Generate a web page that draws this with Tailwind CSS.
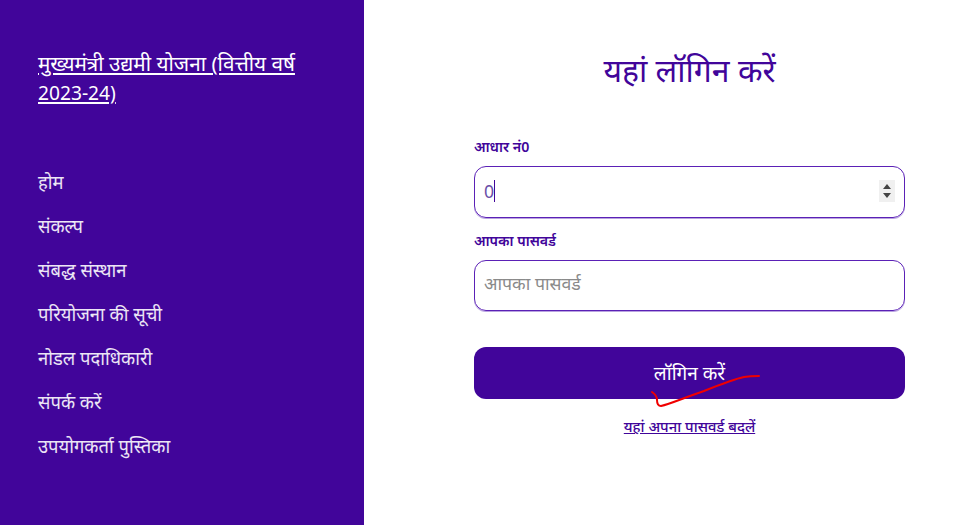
<!DOCTYPE html>
<html lang="hi">

<head>
    <meta charset="UTF-8">
    <title>मुख्यमंत्री उद्यमी योजना</title>
    <script src="https://cdn.jsdelivr.net/npm/@tailwindcss/browser@4"></script>
</head>

<body class="m-0 p-0 w-[975px] h-[525px] overflow-hidden bg-white font-['Noto_Sans',sans-serif]">

    <div class="flex h-full">
        <!-- sidebar -->
        <div class="w-[364px] h-full bg-[#41059a] pl-[38px] pr-[60px] pt-[49px] text-white">
            <a href="#" class="block text-[20.7px] leading-[29px] underline">मुख्यमंत्री उद्यमी योजना (वित्तीय वर्ष <span class="text-[19.2px]">2023-24)</span></a>
            <ul class="mt-[61.5px] flex flex-col gap-[18px] text-[18.4px] leading-[26px] text-white/90">
                <li>होम</li>
                <li>संकल्प</li>
                <li>संबद्ध संस्थान</li>
                <li>परियोजना की सूची</li>
                <li>नोडल पदाधिकारी</li>
                <li>संपर्क करें</li>
                <li>उपयोगकर्ता पुस्तिका</li>
            </ul>
        </div>

        <!-- login form -->
        <div class="relative pl-[110px] w-[541px] pt-[50px]">
            <h1 class="w-[431px] text-center text-[32px] leading-[40px] text-[#41059a]">यहां लॉगिन करें</h1>

            <form class="w-[431px] mt-[47px]">
                <label class="block text-[14.2px] leading-[20px] font-semibold text-[#41059a]">आधार नं0</label>
                <div class="mt-[9px] h-[52px] flex items-center pl-[9px] pr-[9px] pb-[2px] border border-[#5b21b6] shadow-[0_1px_0_#b9a3e0] rounded-[12px]">
                    <span class="text-[17.7px] text-[#6a4fa8]">0</span>
                    <span class="w-px h-[22px] bg-[#41059a]"></span>
                    <span class="ml-auto w-[16px] h-[22px] bg-[#f0f0f0] flex items-center justify-center">
                        <svg width="10" height="16" viewBox="0 0 10 16"><path d="M5 1 9 6H1z M1 10h8l-4 5z" fill="#444"/></svg>
                    </span>
                </div>

                <label class="block mt-[13px] text-[14.2px] leading-[20px] font-semibold text-[#41059a]">आपका पासवर्ड</label>
                <input type="password" placeholder="आपका पासवर्ड" class="mt-[9px] block w-full h-[51px] pl-[9px] pr-[9px] pb-[5px] border border-[#5b21b6] shadow-[0_1px_0_#b9a3e0] rounded-[12px] text-[17.7px] placeholder:text-[#8a8a8a] outline-none">

                <button type="button" class="mt-[36px] block w-full h-[52px] bg-[#41059a] rounded-[12px] text-white text-[19px]">लॉगिन करें</button>

                <div class="mt-[15px] text-center">
                    <a href="#" class="text-[14.8px] leading-[20px] font-medium text-[#41059a] underline">यहां अपना पासवर्ड बदलें</a>
                </div>
            </form>

            <!-- red pen mark on the screenshot -->
            <svg class="absolute left-[280px] top-[370px]" width="125" height="45" viewBox="0 0 125 45" fill="none">
                <path d="M8 22C11 24 13 26 13 30C13 34 14 36 17 36C26 34 42 27 60 21C75 15 90 9 100 7C106 6 111 6 115 6" stroke="#f00000" stroke-width="2" stroke-linecap="round"/>
            </svg>
        </div>
    </div>

</body>

</html>
